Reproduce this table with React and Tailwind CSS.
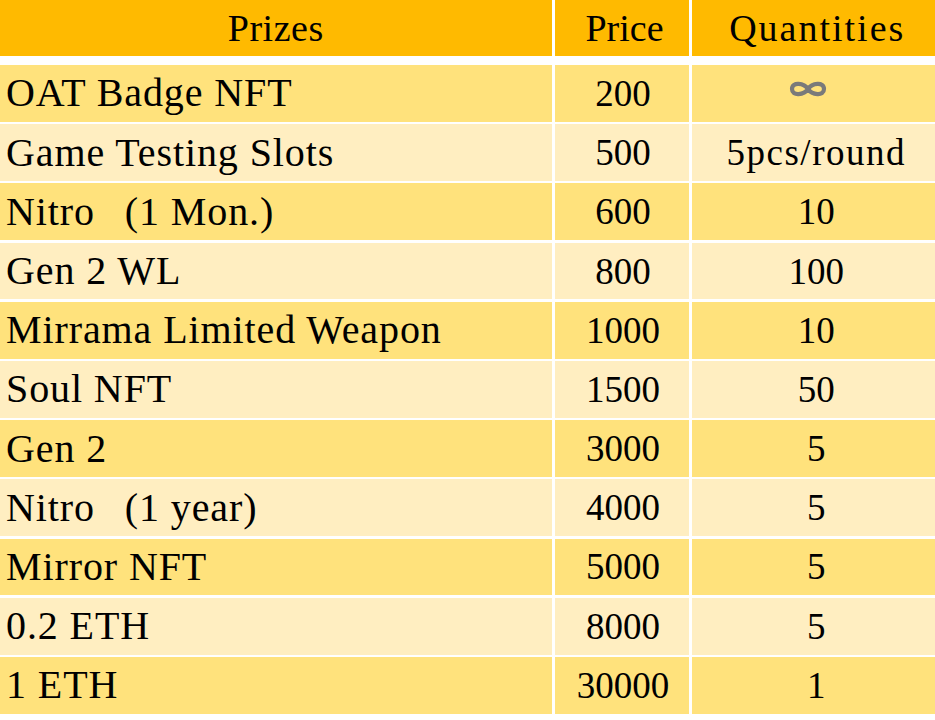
const rows = [
  { prize: 'OAT Badge NFT', price: '200', qty: 'inf' },
  { prize: 'Game Testing Slots', price: '500', qty: '5pcs/round' },
  { prize: 'Nitro\u2002\u2009(1 Mon.)', price: '600', qty: '10' },
  { prize: 'Gen 2 WL', price: '800', qty: '100' },
  { prize: 'Mirrama Limited Weapon', price: '1000', qty: '10' },
  { prize: 'Soul NFT', price: '1500', qty: '50' },
  { prize: 'Gen 2', price: '3000', qty: '5' },
  { prize: 'Nitro\u2002\u2009(1 year)', price: '4000', qty: '5' },
  { prize: 'Mirror NFT', price: '5000', qty: '5' },
  { prize: '0.2 ETH', price: '8000', qty: '5' },
  { prize: '1 ETH', price: '30000', qty: '1' },
];

const InfinityIcon = () => (
  <svg width="42" height="18" viewBox="0 0 42 18" fill="none" className="mr-[16px] mb-[8px]">
    <path
      d="M21 9 C17 3, 5 1.5, 5 9 C5 16.5, 17 15, 21 9 C25 3, 37 1.5, 37 9 C37 16.5, 25 15, 21 9 Z"
      stroke="#7a7a7a"
      strokeWidth="4.2"
      strokeLinejoin="round"
    />
  </svg>
);

const App = () => {
  return (
    <div className="w-[935px] h-[720px] bg-white overflow-hidden text-black [font-family:'Liberation_Serif',serif]">
      <div className="grid grid-cols-[551.5px_134px_1fr] gap-x-[3px] h-[56px] bg-white">
        <div className="bg-[#ffba00] flex items-center justify-center text-[38px] leading-none tracking-[0.5px]">Prizes</div>
        <div className="bg-[#ffba00] flex items-center justify-center text-[38px] leading-none pl-[6px]">Price</div>
        <div className="bg-[#ffba00] flex items-center justify-center text-[38px] leading-none tracking-[2px] pl-[8px]">Quantities</div>
      </div>

      <div className="mt-[9px] flex flex-col gap-y-[2.3px]">
        {rows.map((row, i) => {
          const bg = i % 2 === 0 ? 'bg-[#ffe27c]' : 'bg-[#ffeec1]';
          return (
            <div key={i} className="grid grid-cols-[551.5px_134px_1fr] gap-x-[3px] h-[56.9px]">
              <div className={`${bg} flex items-center pl-[6px] text-[40px] leading-none whitespace-pre tracking-[0.9px]`}>{row.prize}</div>
              <div className={`${bg} flex items-center justify-center text-[37px] leading-none pl-[3px]`}>{row.price}</div>
              <div
                className={`${bg} flex items-center justify-center text-[37px] leading-none pl-[6px] ${
                  row.qty.length > 3 ? 'tracking-[1.5px]' : ''
                }`}
              >
                {row.qty === 'inf' ? <InfinityIcon /> : row.qty}
              </div>
            </div>
          );
        })}
      </div>
    </div>
  );
};

export default App;
